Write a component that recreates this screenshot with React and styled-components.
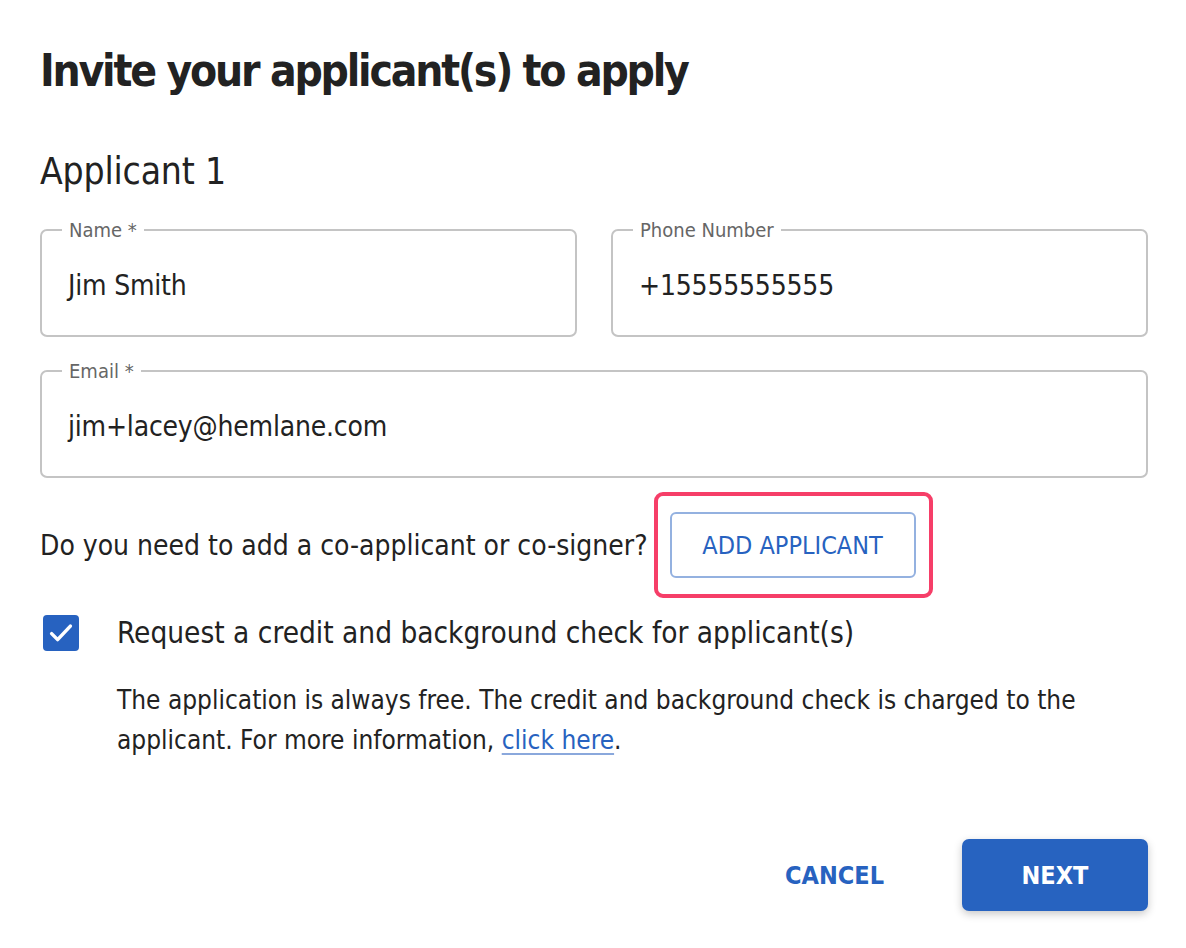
import React from 'react'
import styled, { createGlobalStyle } from 'styled-components'

const GlobalStyle = createGlobalStyle`
  body {
    margin: 0;
    background: #ffffff;
    font-family: 'DejaVu Sans Condensed', 'DejaVu Sans', sans-serif;
    color: #222222;
  }
`

const Page = styled.div`
  width: 1108px;
  padding: 43px 38px 36px 40px;
`

const Title = styled.h1`
  margin: 0;
  font-size: 44px;
  line-height: 56px;
  font-weight: 700;
  letter-spacing: -2.2px;
  color: #222222;
`

const SubTitle = styled.h2`
  margin: 51px 0 0;
  font-size: 37px;
  line-height: 44px;
  font-weight: 400;
  letter-spacing: -0.2px;
  color: #222222;
`

const FieldGrid = styled.div`
  display: grid;
  grid-template-columns: ${({ $cols }) => ($cols === 2 ? '1fr 1fr' : '1fr')};
  column-gap: 34px;
  margin-top: ${({ $top }) => $top}px;
`

const Field = styled.fieldset`
  margin: 0;
  height: 117px;
  box-sizing: border-box;
  border: 2px solid #c4c4c4;
  border-radius: 7px;
  padding: 0 0 0 26px;
  display: flex;
  align-items: center;
  min-width: 0;
`

const Legend = styled.legend`
  margin-left: -6px;
  padding: 0 7px;
  font-size: 20px;
  line-height: 20px;
  color: #666666;
`

const Value = styled.div`
  font-size: 28px;
  color: #222222;
  letter-spacing: -0.2px;
  margin-top: -5px;
`

const AddRow = styled.div`
  display: flex;
  align-items: center;
  gap: 6px;
  margin-top: 14px;
`

const Question = styled.span`
  font-size: 28px;
  color: #222222;
`

const Highlight = styled.div`
  border: 4px solid #f63e68;
  border-radius: 9px;
  padding: 16px 13px 16px 12px;
`

const OutlineButton = styled.button`
  display: block;
  font-family: inherit;
  background: #ffffff;
  border: 2px solid #94b1e0;
  border-radius: 6px;
  width: 246px;
  height: 66px;
  color: #2762c0;
  font-size: 25px;
  cursor: pointer;
`

const CheckRow = styled.div`
  display: flex;
  align-items: center;
  gap: 38px;
  margin-top: 17px;
  padding-left: 3px;
`

const Box = styled.span`
  width: 36px;
  height: 36px;
  border-radius: 4px;
  background: #2762c0;
  display: flex;
  align-items: center;
  justify-content: center;
  flex-shrink: 0;
`

const CheckLabel = styled.span`
  font-size: 29.5px;
  color: #222222;
`

const Note = styled.p`
  margin: 29px 0 0 77px;
  width: 980px;
  font-size: 26px;
  line-height: 40px;
  color: #222222;
`

const Link = styled.a`
  color: #2762c0;
  text-decoration: underline;
  text-decoration-color: #8aa8dc;
  text-underline-offset: 4px;
`

const Actions = styled.div`
  display: flex;
  justify-content: flex-end;
  align-items: center;
  gap: 78px;
  margin-top: 79px;
`

const TextButton = styled.button`
  font-family: inherit;
  background: none;
  border: none;
  padding: 0;
  color: #2762c0;
  font-size: 25px;
  font-weight: 600;
  cursor: pointer;
`

const PrimaryButton = styled.button`
  font-family: inherit;
  width: 186px;
  height: 72px;
  border: none;
  border-radius: 7px;
  background: #2763c0;
  color: #ffffff;
  font-size: 25px;
  font-weight: 600;
  box-shadow: 0 3px 8px rgba(0, 0, 0, 0.22);
  cursor: pointer;
`

export default function App() {
  return (
    <Page>
      <GlobalStyle />
      <Title>Invite your applicant(s) to apply</Title>
      <SubTitle>Applicant 1</SubTitle>
      <FieldGrid $cols={2} $top={26}>
        <Field>
          <Legend>Name *</Legend>
          <Value>Jim Smith</Value>
        </Field>
        <Field>
          <Legend>Phone Number</Legend>
          <Value>+15555555555</Value>
        </Field>
      </FieldGrid>
      <FieldGrid $cols={1} $top={24}>
        <Field>
          <Legend>Email *</Legend>
          <Value>jim+lacey@hemlane.com</Value>
        </Field>
      </FieldGrid>
      <AddRow>
        <Question>Do you need to add a co-applicant or co-signer?</Question>
        <Highlight>
          <OutlineButton>ADD APPLICANT</OutlineButton>
        </Highlight>
      </AddRow>
      <CheckRow>
        <Box>
          <svg width="30" height="30" viewBox="0 0 24 24" fill="none">
            <path d="M4.5 12.5l4.8 4.8L19.5 6.5" stroke="#ffffff" strokeWidth="2.8" strokeLinecap="round" strokeLinejoin="round" />
          </svg>
        </Box>
        <CheckLabel>Request a credit and background check for applicant(s)</CheckLabel>
      </CheckRow>
      <Note>
        The application is always free. The credit and background check is charged to the
        applicant. For more information, <Link href="#">click here</Link>.
      </Note>
      <Actions>
        <TextButton>CANCEL</TextButton>
        <PrimaryButton>NEXT</PrimaryButton>
      </Actions>
    </Page>
  )
}
